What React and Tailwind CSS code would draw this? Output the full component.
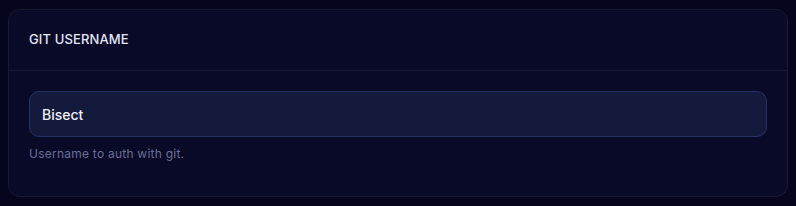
import React from 'react';

export default function App() {
  return (
    <div className="w-[796px] h-[206px] bg-[#05061e] px-2 pt-[9px] font-['Inter',sans-serif]">
      <div className="h-[188px] rounded-xl border border-[#171936] bg-[#090a27]">
        <div className="h-[61px] flex items-center px-5 border-b border-[#171936]">
          <span className="text-[13px] font-medium tracking-[0.01em] text-[#e4e6f4]">GIT USERNAME</span>
        </div>
        <div className="px-5 pt-5">
          <div className="h-[46px] rounded-[10px] border border-[#2a3068] bg-[#141a3c] flex items-center px-3">
            <span className="text-[14px] font-medium text-[#eef0fa]">Bisect</span>
          </div>
          <p className="mt-[9px] text-[12px] leading-4 tracking-[0.02em] text-[#6a6f96]">Username to auth with git.</p>
        </div>
      </div>
    </div>
  );
}
